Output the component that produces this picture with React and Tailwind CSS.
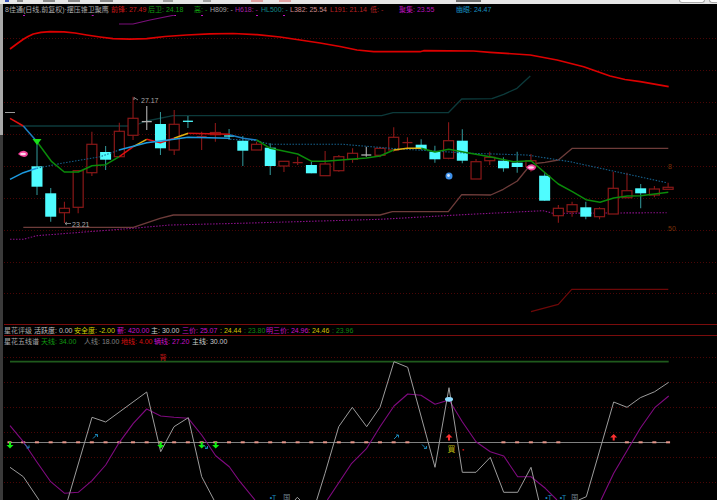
import React from "react";

const FONT = "[font-family:'Liberation_Sans','Noto_Sans_CJK_SC',sans-serif]";

// [up, high, top, bottom, low]
const CANDLES = [
  ["c", 140, 166.3, 186.7, 195],
  ["c", 188, 193.3, 216.7, 221.7],
  ["r", 201.7, 208.3, 212.7, 223],
  ["r", 170, 170.7, 207.3, 213.3],
  ["r", 131.7, 144.3, 172.7, 176],
  ["c", 146, 152, 159.7, 170],
  ["r", 122.7, 131.3, 156.7, 156.7],
  ["r", 96.7, 118.3, 135.3, 140],
  ["g", 106, 121.3, 122, 130],
  ["c", 112, 124, 148.3, 155],
  ["r", 110, 124.3, 150, 155],
  ["c", 116, 121, 122, 128],
  ["r", 131.7, 136.3, 137, 150],
  ["r", 123, 132.5, 134.7, 141.7],
  ["c", 129, 135.7, 136.3, 140],
  ["c", 136, 140.7, 150.7, 166],
  ["r", 141.7, 144.3, 150, 150],
  ["c", 143.3, 147.7, 166, 175],
  ["r", 161, 161.3, 166, 172],
  ["r", 156.7, 162.3, 163, 165],
  ["c", 161.7, 165, 173.3, 173.3],
  ["r", 151, 164, 175.7, 175.7],
  ["r", 155, 156.7, 170.7, 171.7],
  ["r", 148.3, 153.3, 159.3, 162.7],
  ["g", 146.7, 154.7, 155.3, 156.7],
  ["r", 146.7, 148.3, 155.3, 157.3],
  ["r", 127.3, 137.3, 150, 151.7],
  ["r", 137.3, 142.3, 143, 148.3],
  ["c", 139.3, 144.7, 149, 150],
  ["c", 145.7, 151.7, 159.3, 162.7],
  ["r", 122.3, 140.7, 158.3, 159.3],
  ["c", 129.3, 140.7, 160.7, 163.3],
  ["r", 159, 161.7, 179, 179],
  ["r", 151.7, 157.3, 160.7, 165],
  ["c", 157.3, 160.7, 168.3, 171.7],
  ["c", 151.7, 162.7, 167, 172.7],
  ["r", 154, 160.7, 166.7, 171.7],
  ["c", 173.3, 175.7, 200.7, 200.7],
  ["r", 205, 208.3, 215.7, 222.7],
  ["r", 201.7, 204.7, 211.7, 216.7],
  ["c", 201.7, 207.3, 216.7, 219.3],
  ["r", 207.3, 208.7, 216.7, 219.3],
  ["r", 171.7, 188.3, 214, 214],
  ["r", 172.7, 190.7, 197.7, 198],
  ["c", 184, 188.3, 193.3, 208.3],
  ["r", 186, 189, 195, 197.3],
  ["r", 182.7, 187.3, 189.3, 189.3],
];

const candleX = (i) => 37 + 13.72 * i;

const pts = {
  redTop: "10,49 16,44.5 23.3,39.3 28,36.5 33.3,34 41,32.3 50,31.7 64,31.9 75,33 86.7,35 100,37 113,38.7 130,39.2 146.7,38.7 165,36.5 186.7,35 210,33.8 233,33.5 257,34.7 280,37 300,40 320,43 340,46.5 357,50 373.7,51.7 420,51.7 423.7,50.7 473.7,51 490,52.3 530.3,55 557,60 583.7,66.7 610,76 625,79.5 640.3,81.7 668.7,86.7",
  purpleTop: "119,24 133,24 150,20 175,15",
  teal: "10,126 133,126 146.7,121 173,115.7 381.7,115.7 393,112.7 448.3,112.7 461.7,99 492,98.7 503.7,94.3 517,88.3 530.3,76",
  brown: "23.3,227.3 133.3,227.3 160,218.3 173.3,215 380,215 392.3,211.7 448.3,211.7 461.7,194.7 490.7,195 503.3,189.3 517.3,181 531,164 545,162.3 558.3,160 572.3,148.3 668.3,148.3",
  purpleDots: "10,239.3 23.3,239.3 36.7,235.7 133,228.3 170,225 240,223.3 380,219.3 470,214.3 543,210.7 553,213.3 666.7,212.7",
  blueDots: "36.7,168.3 63,163 100,156.7 119,150",
  blueDots2: "230,139.3 256.7,140.7 270,144.3 343.3,144.3 390,148.3 470,153.3 526.7,155 570,161.7 666.7,182.7",
  blueSolid1: "10,179.3 23.3,172.7 36.7,168.3",
  blueSolid2: "119,150 146.7,142.7 174,139.3 188,137.3 230,138.3",
  ma: [
    ["#e01010", "10,118.3 23.3,126"],
    ["#1d7fc4", "23.3,126 37,141.7"],
    ["#0a8a0a", "37,141.7 51.7,161.7 64.3,172 78.3,172 92,165.7 105.7,164.7 119.3,156.7"],
    ["#e01010", "119.3,156.7 133.3,146.7"],
    ["#e0b010", "133.3,146.7 146.7,139.3"],
    ["#e01010", "146.7,139.3 160.3,142.7 174,138.3"],
    ["#e0b010", "174,138.3 188.3,133.3"],
    ["#c81010", "188.3,133.3 230,134.3"],
    ["#1d7fc4", "230,135 243.3,138.3 256.7,140"],
    ["#0a8a0a", "256.7,140 270.3,148.3 297.7,154 311.7,161.3 325.3,161.3 366.3,158 380,156 393.7,150"],
    ["#e0b010", "393.7,150 407.3,148.3 421.3,148.3"],
    ["#0a8a0a", "421.3,148.3 435,152 448.7,149.3 470,153.3 490,156.7 513.3,161.7 531,160.7 545,172.7 558.3,184 572.3,191.7 586,199.7 600,202.3 613.7,198 627.3,196 640.7,195.7 668.3,192.3"],
  ],
  redBottom: "531,311.7 558.3,304.3 571.7,289.3 668.3,289.3",
};

const lowerWhite = [
  "10,467.3 23.3,476.7 39,500",
  "67.7,500 92,417.3 105.7,422 146.7,392 160.7,451.7 174,426.7 188.3,417.7 201.7,476.7 214,500",
  "295,500 297.3,497.3 300,500",
  "316.7,500 325,473.3 338.7,426.7 352.3,407.3 366.7,426.7 380,407.3 394,361.7 407.7,367.3 435,467.3 449,387.7 462.3,472.3 476,472.3 490.3,457.3 503.7,492.3 517.7,492.3 531,467.3 538.7,500",
  "578.7,500 586.3,496.7 613.7,402 627,407.3 640.3,397.7 654.7,391.7 668.7,382.3",
];

const lowerPurple = [
  "10,425.7 23.3,441.7 36.7,461.7 50.7,481.7 64.7,493.3 78.3,492.3 92,480.7 105.7,465 119.3,442.3 133.3,423.3 146.7,409 160.7,416 174,417.3 188.3,418.3 201.7,435 215.7,455.7 229.3,466.7 240,481.7 255,500",
  "327.3,500 351.7,463.3 366.7,448.3 380,426.7 394,406 407.7,394 421,395.3 435,404.3 449,400 462.3,421.7 476,441.7 490.3,451.7 503.7,456 517.7,476.7 531,476.7 545.3,488.3 557,500",
  "601,500 613.7,473.3 627,450.7 640.3,428.3 654.7,407.7 668.7,396",
];

// slots with no pink dash on the zero line
const NO_DASH = [29, 30, 31, 32, 33, 34, 40, 41, 42, 43];

const Seg = ({ w, className, children }) => (
  <span className={`shrink-0 whitespace-nowrap ${className}`} style={{ width: w }}>
    {children}
  </span>
);

const HEAD = [
  [106, "text-[#a8a8a8]", "8佳通(日线,前复权)·摆压锥卫聚鹰"],
  [37, "text-[#c81818]", "前锋: 27.49"],
  [46, "text-[#109810]", "后卫: 24.18"],
  [16, "text-[#109810]", "高: -"],
  [25, "text-[#a0a0a0]", "H809: -"],
  [26, "text-[#a020a0]", "H618: -"],
  [29, "text-[#108888]", "HL500: -"],
  [40, "text-[#cc8a8a]", "L382: 25.54"],
  [40, "text-[#b82020]", "L191: 21.14"],
  [29, "text-[#b82020]", "低: -"],
  [57, "text-[#b810b8]", "聚集: 23.55"],
  [50, "text-[#1890c0]", "幽眼: 24.47"],
];

const ROW1 = [
  [30, "text-[#a8a8a8]", "星花评级"],
  [40, "text-[#c0c0c0]", "活跃度: 0.00"],
  [43, "text-[#d0d000]", "安全度: -2.00"],
  [34, "text-[#c810c8]", "薪: 420.00"],
  [31, "text-[#c8c8c8]", "主: 30.00"],
  [38, "text-[#c810c8]", "三价: 25.07"],
  [24, "text-[#d0c000]", ": 24.44"],
  [22, "text-[#108810]", ": 23.80"],
  [42, "text-[#c810c8]", "明三价: 24.96"],
  [24, "text-[#d0c000]", ": 24.46"],
  [30, "text-[#108810]", ": 23.96"],
];

const ROW2 = [
  [37, "text-[#a8a8a8]", "星花五线谱"],
  [43, "text-[#109810]", "天线: 34.00"],
  [37, "text-[#808080]", "人线: 18.00"],
  [33, "text-[#d81010]", "地线: 4.00"],
  [38, "text-[#c810c8]", "辆线: 27.20"],
  [40, "text-[#c8c8c8]", "主线: 30.00"],
];

const Row = ({ items, className = "" }) => (
  <div className={`flex items-center text-[7px] leading-none ${className}`}>
    {items.map(([w, color, label]) => (
      <Seg key={label + w} w={w} className={color}>
        {label}
      </Seg>
    ))}
  </div>
);

const Line = ({ p, c, w = 1, dash }) => (
  <polyline points={p} fill="none" stroke={c} strokeWidth={w} strokeDasharray={dash} strokeLinejoin="round" />
);

const Grid = ({ ys }) =>
  ys.map((y) => (
    <line key={y} x1="4" x2="717" y1={y} y2={y} stroke="#4a0606" strokeWidth="1" strokeDasharray="1 2" />
  ));

function Candle({ c, i }) {
  const [kind, high, top, bottom, low] = c;
  const x = candleX(i);
  const col = kind === "c" ? "#4ffcff" : kind === "g" ? "#b0b0b0" : "#8a1818";
  const wick = kind === "c" ? "#2f8d8f" : col;
  const doji = bottom - top < 1.2;
  return (
    <g>
      <line x1={x} x2={x} y1={high} y2={low} stroke={wick} strokeWidth="1.1" />
      {doji ? (
        <line x1={x - 5} x2={x + 5} y1={top + 0.3} y2={top + 0.3} stroke={col} strokeWidth="1.3" />
      ) : kind === "c" ? (
        <rect x={x - 5.5} y={top} width="11" height={bottom - top} fill={col} />
      ) : (
        <rect x={x - 5} y={top} width="10" height={bottom - top} fill="#000" stroke={col} strokeWidth="1.2" />
      )}
    </g>
  );
}

function Fish({ x, y }) {
  return (
    <g>
      <path d={`M${x - 5} ${y} q3 -4 7 -3 q3 1 3 3 q-1 3 -4 3 q-3 0 -6 -3z`} fill="#f2409a" />
      <ellipse cx={x} cy={y} rx="3" ry="1.2" fill="#ffd8ec" />
    </g>
  );
}

function MainChart() {
  return (
    <svg viewBox="4 15 713 309" className="block h-[309px] w-[713px]">
      <Grid ys={[38.5, 70.5, 102.5, 134.5, 166.5, 198.5, 230.5, 262.5, 293.5]} />
      {[24, 92.7, 175, 202, 257, 284].map((x) => (
        <rect key={x} x={x - 1} y="14" width="2" height="2" fill="#c010c0" />
      ))}
      <Line p={pts.purpleTop} c="#7a0f7a" w="1.2" />
      <Line p={pts.redTop} c="#dc0000" w="1.7" />
      <Line p={pts.teal} c="#0c3a3b" w="1.3" />
      <Line p={pts.brown} c="#6e3c3a" w="1.3" />
      <Line p={pts.purpleDots} c="#8a108a" w="1.1" dash="1.5 1.5" />
      <line x1="5" x2="15" y1="112.5" y2="112.5" stroke="#9a9a9a" />
      {CANDLES.map((c, i) => (
        <Candle key={i} c={c} i={i} />
      ))}
      <Line p={pts.blueDots} c="#15608c" w="1.1" dash="1.5 1.5" />
      <Line p={pts.blueDots2} c="#15608c" w="1.1" dash="1.5 1.5" />
      {pts.ma.map(([c, p]) => (
        <Line key={p} p={p} c={c} w="1.5" />
      ))}
      <Line p={pts.blueSolid1} c="#1c9ae0" w="1.5" />
      <Line p={pts.blueSolid2} c="#1c9ae0" w="1.5" />
      <path d="M32.5 139h9l-4.5 6z" fill="#18e018" />
      <Fish x={23} y={154} />
      <Fish x={531} y={167.5} />
      <circle cx="449" cy="176" r="3.5" fill="#3d8fe8" />
      <circle cx="448.5" cy="175.5" r="1.4" fill="#cfe6ff" />
      <path d="M134 100v-2.5l4 2.5" fill="none" stroke="#a8a8a8" strokeWidth="0.8" />
      <text x="141" y="102.5" fontSize="7" fill="#a8a8a8">27.17</text>
      <path d="M65 223.5h6M65 223.5l2-1.5M65 223.5l2 1.5" fill="none" stroke="#a8a8a8" strokeWidth="0.7" />
      <text x="72" y="226.5" fontSize="7" fill="#a8a8a8">23.21</text>
      <text x="668" y="169" fontSize="7" fill="#7c3208">8</text>
      <text x="668" y="230.5" fontSize="7" fill="#7c3208">50</text>
      <Line p={pts.redBottom} c="#6e0808" w="1.2" />
      <path d="M705 7.5l2.5 2.5-2.5 2.5-2.5-2.5z" fill="none" stroke="#8a1010" strokeWidth="0.8" />
      <rect x="711.5" y="7.5" width="5" height="5" fill="none" stroke="#8a1010" strokeWidth="0.8" />
    </svg>
  );
}

// block arrow, tip pointing down or up
function Arrow({ x, y, up, c }) {
  const d = up ? -1 : 1;
  return (
    <path
      d={`M${x - 1} ${y - d * 3}h2v${d * 3}h2.5l-3.5 ${d * 3.5}l-3.5 ${-d * 3.5}h2.5z`}
      fill={c}
    />
  );
}

// tiny diagonal arrows
const Small = ({ x, y, up }) =>
  up ? (
    <path d={`M${x - 4} ${y + 4}L${x} ${y}M${x - 2} ${y}h2.5v2.5`} stroke="#1a86b8" strokeWidth="1" fill="none" />
  ) : (
    <path d={`M${x - 4} ${y - 4}L${x} ${y}M${x - 2} ${y}h2.5v-2.5`} stroke="#1a86b8" strokeWidth="1" fill="none" />
  );

function LowerChart() {
  return (
    <svg viewBox="4 346 713 154" className="block h-[154px] w-[713px]">
      <Grid ys={[357.5, 382.5, 407.5, 432.5, 457.5, 482.5]} />
      <line x1="10" x2="668.7" y1="361.7" y2="361.7" stroke="#1f5a1c" strokeWidth="1.8" />
      <line x1="10" x2="670" y1="442.5" y2="442.5" stroke="#808080" strokeWidth="1" />
      {Array.from({ length: 49 }).map((_, i) =>
        NO_DASH.includes(i - 1) ? null : (
          <rect key={i} x={9.5 + 13.72 * i - 2} y="441.3" width="4" height="2" fill="#e8988c" />
        )
      )}
      {lowerPurple.map((p) => (
        <Line key={p} p={p} c="#800a80" w="1.1" />
      ))}
      {lowerWhite.map((p) => (
        <Line key={p} p={p} c="#9c9c9c" w="1" />
      ))}
      {[10, 160.7, 201.7, 215.7].map((x) => (
        <Arrow key={x} x={x} y={445} c="#10f010" />
      ))}
      {[449, 613.7].map((x) => (
        <Arrow key={x} x={x} y={437.5} up c="#ff3030" />
      ))}
      {[[97, 434.5, true], [28.5, 448, false], [207, 448.5, false], [398, 435, true], [426, 448.5, false]].map(([x, y, up]) => (
        <Small key={x} x={x} y={y} up={up} />
      ))}
      <ellipse cx="449" cy="399.3" rx="4" ry="2.4" fill="#8fdcff" />
      <text x="163" y="360" fontSize="7" fill="#d01818" textAnchor="middle">背</text>
      <text x="451.5" y="452" fontSize="8" fill="#b8b010" textAnchor="middle">買</text>
      <rect x="462.5" y="449" width="1.6" height="1.6" fill="#c01010" />
      {[273, 548.7, 563].map((x) => (
        <text key={x} x={x} y="500" fontSize="7" fill="#1a86b8" textAnchor="middle">•T</text>
      ))}
      {[286.7, 574.7].map((x) => (
        <text key={x} x={x} y="500" fontSize="7" fill="#7a8a98" textAnchor="middle">国</text>
      ))}
    </svg>
  );
}

export default function App() {
  return (
    <div className={`flex h-[500px] w-[717px] flex-col overflow-hidden bg-black ${FONT}`}>
      {/* cut off toolbar at the top */}
      <div className="flex h-[4px] items-start bg-[#e6e6e6]">
        <div className="ml-[5px] h-[2px] w-[4px] bg-[#3a55b8]" />
        <div className="ml-[8px] h-[2px] w-[6px] bg-[#8a8a8a]" />
        <div className="ml-[20px] h-[2px] w-[12px] bg-[#8a8a8a]" />
        <div className="ml-[13px] h-[2px] w-[12px] bg-[#8a8a8a]" />
        <div className="ml-[20px] h-[2px] w-[13px] bg-[#8a8a8a]" />
        <div className="ml-[50px] h-[2px] w-[10px] bg-[#a0a0a0]" />
        <div className="ml-[30px] h-[2px] w-[8px] bg-[#a0a0a0]" />
        <div className="ml-[40px] h-[2px] w-[12px] bg-[#e0a0a0]" />
        <div className="ml-[16px] h-[2px] w-[12px] bg-[#e0a0a0]" />
        <div className="ml-[165px] h-[2px] w-[25px] bg-[#707070]" />
        <div className="ml-auto mr-[4px] h-[3px] w-[26px] rounded-b-sm border-x border-b border-[#aaaaaa] bg-white" />
        <div className="h-[3px] w-[8px] rounded-bl-sm border-b border-l border-[#aaaaaa] bg-white" />
      </div>
      <div className="flex min-h-0 flex-1">
        {/* scrollbar rail */}
        <div className="flex w-[4px] flex-col pr-[1px]">
          <div className="h-[131px] bg-[#a8a8a8]" />
          <div className="flex-1 bg-[#3a3a3a]" />
        </div>
        <div className="w-[713px]">
          <Row items={HEAD} className="h-[11px] pl-[1px]" />
          <MainChart />
          <div className="border-y border-[#7a0c0c]">
            <Row items={ROW1} className="h-[10px]" />
          </div>
          <Row items={ROW2} className="h-[10px]" />
          <LowerChart />
        </div>
      </div>
    </div>
  );
}
